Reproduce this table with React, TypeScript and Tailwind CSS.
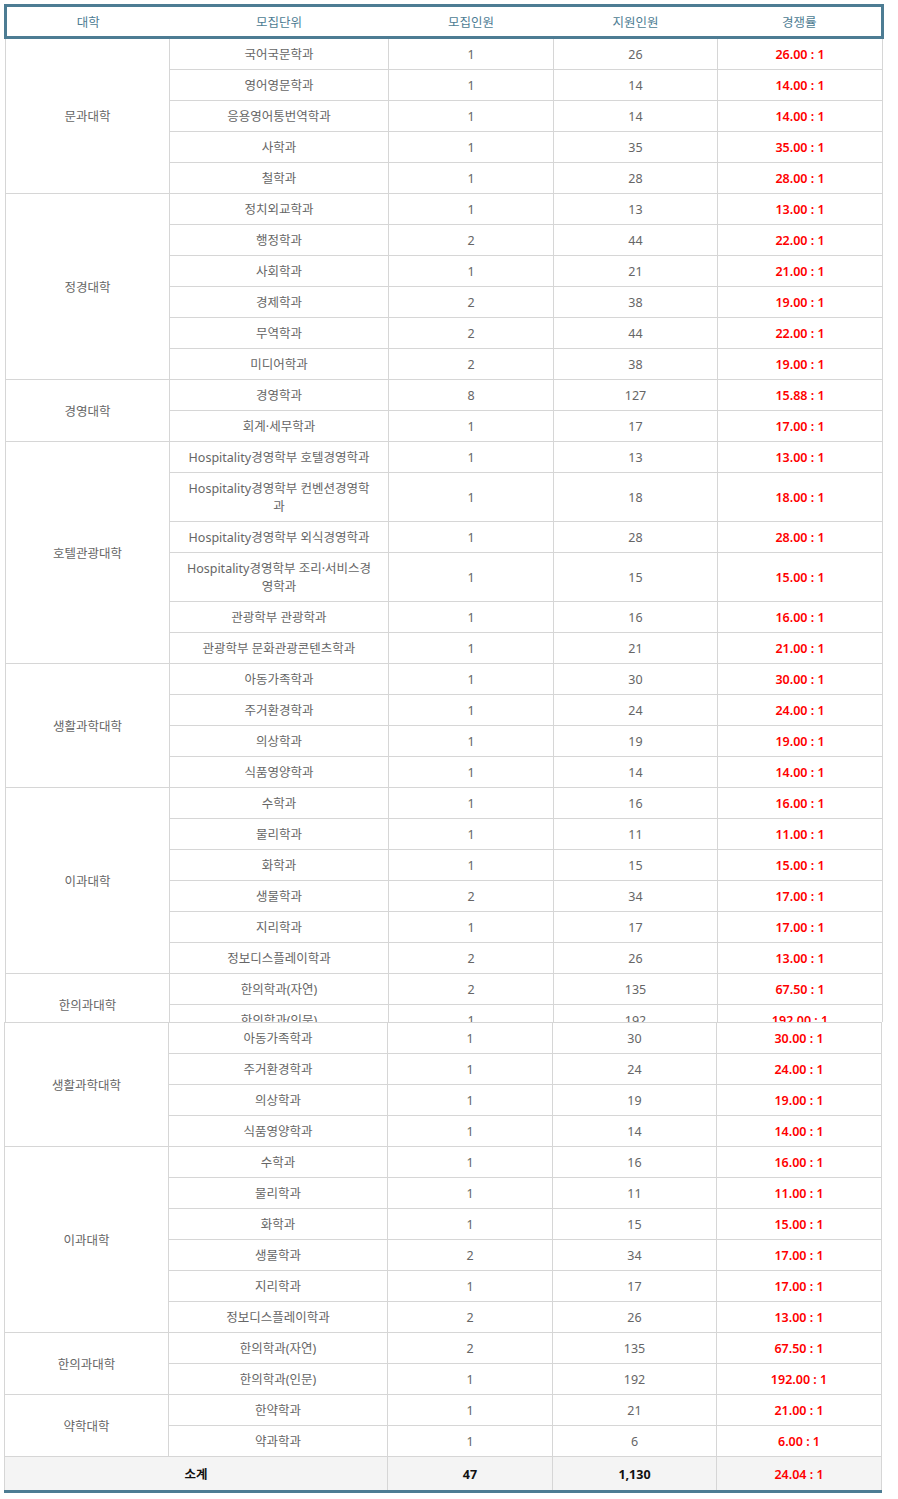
import React from 'react'

type Row = [string, number, string, string]
type Group = { name: string; rows: Row[] }

const upper: Group[] = [
   {
      name: '문과대학',
      rows: [
         ['국어국문학과', 1, '26', '26.00'],
         ['영어영문학과', 1, '14', '14.00'],
         ['응용영어통번역학과', 1, '14', '14.00'],
         ['사학과', 1, '35', '35.00'],
         ['철학과', 1, '28', '28.00'],
      ],
   },
   {
      name: '정경대학',
      rows: [
         ['정치외교학과', 1, '13', '13.00'],
         ['행정학과', 2, '44', '22.00'],
         ['사회학과', 1, '21', '21.00'],
         ['경제학과', 2, '38', '19.00'],
         ['무역학과', 2, '44', '22.00'],
         ['미디어학과', 2, '38', '19.00'],
      ],
   },
   {
      name: '경영대학',
      rows: [
         ['경영학과', 8, '127', '15.88'],
         ['회계·세무학과', 1, '17', '17.00'],
      ],
   },
   {
      name: '호텔관광대학',
      rows: [
         ['Hospitality경영학부 호텔경영학과', 1, '13', '13.00'],
         ['Hospitality경영학부 컨벤션경영학과', 1, '18', '18.00'],
         ['Hospitality경영학부 외식경영학과', 1, '28', '28.00'],
         ['Hospitality경영학부 조리·서비스경영학과', 1, '15', '15.00'],
         ['관광학부 관광학과', 1, '16', '16.00'],
         ['관광학부 문화관광콘텐츠학과', 1, '21', '21.00'],
      ],
   },
]

const life: Group = {
   name: '생활과학대학',
   rows: [
      ['아동가족학과', 1, '30', '30.00'],
      ['주거환경학과', 1, '24', '24.00'],
      ['의상학과', 1, '19', '19.00'],
      ['식품영양학과', 1, '14', '14.00'],
   ],
}

const science: Group = {
   name: '이과대학',
   rows: [
      ['수학과', 1, '16', '16.00'],
      ['물리학과', 1, '11', '11.00'],
      ['화학과', 1, '15', '15.00'],
      ['생물학과', 2, '34', '17.00'],
      ['지리학과', 1, '17', '17.00'],
      ['정보디스플레이학과', 2, '26', '13.00'],
   ],
}

const oriental: Group = {
   name: '한의과대학',
   rows: [
      ['한의학과(자연)', 2, '135', '67.50'],
      ['한의학과(인문)', 1, '192', '192.00'],
   ],
}

const pharmacy: Group = {
   name: '약학대학',
   rows: [
      ['한약학과', 1, '21', '21.00'],
      ['약과학과', 1, '6', '6.00'],
   ],
}

const td = 'border border-[#d6d6d6] px-[15px] pt-[7px] pb-[5px] text-center align-middle text-[12.5px] leading-[18px] text-[#666]'
const ratio = 'border border-[#d6d6d6] px-[15px] pt-[7px] pb-[5px] text-center align-middle text-[12.5px] leading-[18px] font-semibold text-[#ff0000]'
const th = 'border-y-[3px] border-[#4d7c93] pt-[6px] pb-[4px] text-center text-[12.5px] leading-[19px] font-normal text-[#4d7c93]'
const foot = 'border border-b-[3px] border-[#d6d6d6] border-b-[#4d7c93] pt-[8px] pb-[6px] text-center text-[12.5px] leading-[19px] font-bold'

const Cols = () => (
   <colgroup>
      <col className="w-[164px]" />
      <col className="w-[219px]" />
      <col className="w-[165px]" />
      <col className="w-[164px]" />
      <col className="w-[165px]" />
   </colgroup>
)

const GroupRows: React.FC<{ group: Group }> = ({ group }) => (
   <>
      {group.rows.map((row, i) => (
         <tr key={row[0]}>
            {i === 0 ? (
               <td className={td} rowSpan={group.rows.length}>{group.name}</td>
            ) : null}
            <td className={td}>{row[0]}</td>
            <td className={td}>{row[1]}</td>
            <td className={td}>{row[2]}</td>
            <td className={ratio}>{row[3]} : 1</td>
         </tr>
      ))}
   </>
)

export default function App() {
   return (
      <div className="min-h-[1499px] w-[898px] bg-white pl-[4px] pt-[4px] font-['Noto_Sans','Noto_Sans_CJK_KR',sans-serif]">
         {/* first capture, cut off in the middle of 한의과대학 */}
         <div className="h-[1018px] overflow-hidden">
            <table className="w-[877px] table-fixed border-collapse">
               <Cols />
               <thead>
                  <tr>
                     <th className={th + ' border-l-[3px]'}>대학</th>
                     <th className={th}>모집단위</th>
                     <th className={th}>모집인원</th>
                     <th className={th}>지원인원</th>
                     <th className={th + ' border-r-[3px]'}>경쟁률</th>
                  </tr>
               </thead>
               <tbody>
                  {upper.map((g) => <GroupRows key={g.name} group={g} />)}
                  <GroupRows group={life} />
                  <GroupRows group={science} />
                  <GroupRows group={oriental} />
               </tbody>
            </table>
         </div>

         <table className="w-[877px] table-fixed border-collapse">
            <Cols />
            <tbody>
               <GroupRows group={life} />
               <GroupRows group={science} />
               <GroupRows group={oriental} />
               <GroupRows group={pharmacy} />
               <tr className="bg-[#f4f4f4]">
                  <td colSpan={2} className={foot + ' text-[#111]'}>소계</td>
                  <td className={foot + ' text-[#111]'}>47</td>
                  <td className={foot + ' text-[#111]'}>1,130</td>
                  <td className={foot + ' font-semibold text-[#ff0000]'}>24.04 : 1</td>
               </tr>
            </tbody>
         </table>
      </div>
   )
}
